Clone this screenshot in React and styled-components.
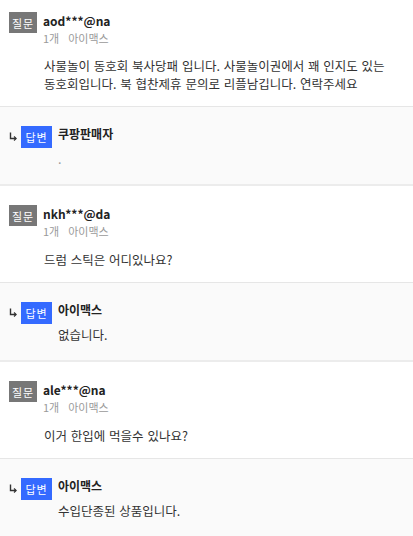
import React from 'react';
import styled, { createGlobalStyle } from 'styled-components';

const Global = createGlobalStyle`
  body {
    margin: 0;
    background: #fff;
    font-family: "Noto Sans CJK KR", "Noto Sans", sans-serif;
    color: #333;
  }
`;

const items = [
  {
    user: 'aod***@na',
    count: '1개',
    product: '아이맥스',
    text: '사물놀이 동호회 북사당패 입니다. 사물놀이권에서 꽤 인지도 있는 동호회입니다. 북 협찬제휴 문의로 리플남깁니다. 연락주세요',
    seller: '쿠팡판매자',
    answer: '.',
    first: true,
  },
  {
    user: 'nkh***@da',
    count: '1개',
    product: '아이맥스',
    text: '드럼 스틱은 어디있나요?',
    seller: '아이맥스',
    answer: '없습니다.',
  },
  {
    user: 'ale***@na',
    count: '1개',
    product: '아이맥스',
    text: '이거 한입에 먹을수 있나요?',
    seller: '아이맥스',
    answer: '수입단종된 상품입니다.',
  },
];

const Badge = styled.span`
  display: inline-flex;
  align-items: center;
  justify-content: center;
  flex: none;
  width: ${p => (p.answer ? 31 : 28)}px;
  height: ${p => (p.answer ? 22 : 21)}px;
  background: ${p => (p.answer ? '#346aff' : '#777')};
  color: #fff;
  font-size: 11px;
  letter-spacing: 1px;
`;

const Question = styled.div`
  padding: ${p => (p.first ? 12 : 19)}px 12px 13px 9px;
  border-bottom: 1px solid #e6e6e6;
  background: #fff;
`;

const Head = styled.div`
  display: flex;
  gap: 6px;
`;

const Info = styled.div`
  display: flex;
  flex-direction: column;
`;

const User = styled.span`
  font-size: 12px;
  font-weight: 700;
  line-height: 17px;
  color: #222;
`;

const Meta = styled.div`
  display: flex;
  gap: 9px;
  font-size: 11px;
  line-height: 18px;
  color: #9a9a9a;
`;

const Body = styled.p`
  margin: ${p => (p.first ? 10 : 11)}px 0 0 35px;
  font-size: 12.5px;
  line-height: 18px;
  word-spacing: 1px;
  word-break: keep-all;
  color: #333;
`;

const Answer = styled.div`
  padding: 19px 12px 16px 9px;
  background: #fafafa;
  border-bottom: 2px solid #ececec;
`;

const AnswerHead = styled.div`
  display: flex;
  align-items: flex-start;
`;

const Arrow = styled.svg`
  width: 8px;
  height: 9px;
  margin: 6px 4px 0 0;
`;

const Seller = styled.span`
  margin-left: 6px;
  font-size: 12px;
  font-weight: 700;
  line-height: 15px;
  color: #222;
`;

const AnswerText = styled.p`
  margin: 2px 0 0 49px;
  font-size: 12.5px;
  line-height: 18px;
  word-spacing: 1px;
  color: ${p => (p.faint ? '#999' : '#333')};
`;

export default function App() {
  return (
    <>
      <Global />
      {items.map((it, i) => (
        <div key={i}>
          <Question first={it.first}>
            <Head>
              <Badge>질문</Badge>
              <Info>
                <User>{it.user}</User>
                <Meta>
                  <span>{it.count}</span>
                  <span>{it.product}</span>
                </Meta>
              </Info>
            </Head>
            <Body first={it.first}>{it.text}</Body>
          </Question>
          <Answer>
            <AnswerHead>
              <Arrow viewBox="0 0 8 9">
                <path d="M1.5 0.5V6.5H7" fill="none" stroke="#333" strokeWidth="1.4" />
                <path d="M5 4.5L7.2 6.5L5 8.5" fill="none" stroke="#333" strokeWidth="1.2" />
              </Arrow>
              <Badge answer>답변</Badge>
              <Seller>{it.seller}</Seller>
            </AnswerHead>
            <AnswerText faint={it.answer === '.'}>{it.answer}</AnswerText>
          </Answer>
        </div>
      ))}
    </>
  );
}
